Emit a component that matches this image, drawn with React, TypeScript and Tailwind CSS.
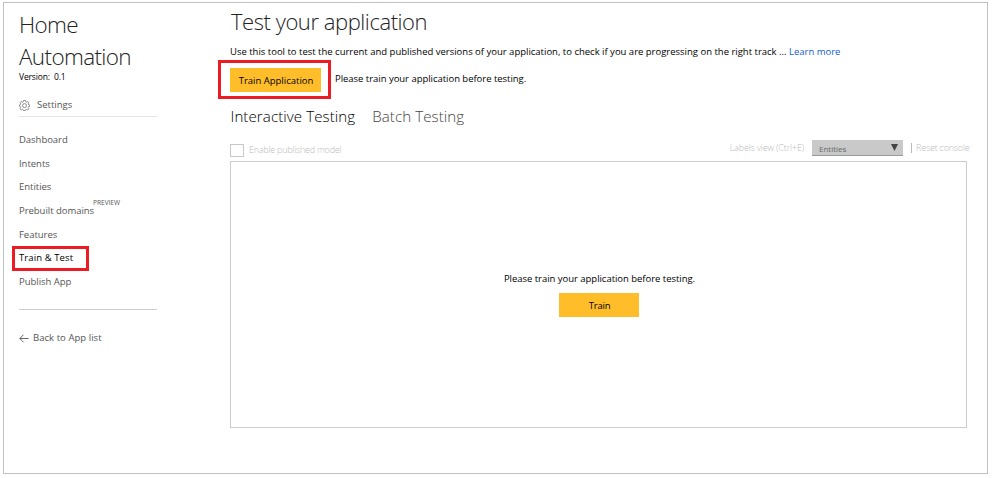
import React from "react";

const navItems = ["Dashboard", "Intents", "Entities", "Prebuilt domains", "Features", "Train & Test", "Publish App"];

function GearIcon() {
  return (
    <svg width="11" height="11" viewBox="0 0 11 11" fill="none" stroke="#777" strokeWidth="0.8" className="shrink-0">
      <path d="M4.500 0.500h2l.3 1.300 .8.400 1.200-.7 1.100 1.300-.7 1.100.3.800 1.100.2v1.500l-1.100.3-.4.900.7 1.100-1.200 1.300-1.200-.7-.7.300-.3 1h-1.900l-.3-1-.8-.3-1.200.7L1 8.700l.7-1.100-.3-.9-1-.3V4.900l1-.2.4-.8L1 2.800l1.200-1.300 1.200.7.800-.4z" />
      <circle cx="5.500" cy="5.600" r="2" />
    </svg>
  );
}

function BackIcon() {
  return (
    <svg width="10" height="9" viewBox="0 0 10 9" fill="none" stroke="#555" strokeWidth="0.9" className="mt-px shrink-0">
      <path d="M9.500 4.500H0.800M4.500 0.700L0.800 4.500L4.500 8.300" />
    </svg>
  );
}

function Sidebar() {
  return (
    <aside className="ml-[15px] flex w-[138px] shrink-0 flex-col pt-[6px] text-[#555]">
      <h1 className="w-[130px] text-[22.500px] leading-8 font-light tracking-[-0.640px] text-[#222]">Home Automation</h1>
      <p className="-mt-[3px] h-[14px] text-[8.500px] leading-[14px] tracking-[-0.150px] text-black">
        Version:&nbsp; 0.1
      </p>
      <div className="mt-[9px] flex h-[24px] items-center gap-[7px] border-b border-[#e6e6e6] pt-[2px] text-[9.500px]">
        <GearIcon />
        <span>Settings</span>
      </div>
      <nav className="mt-[11px] flex flex-col text-[9.500px]">
        {navItems.map((item) => (
          <a key={item} className="flex h-[23.700px] items-center whitespace-nowrap">
            {item === "Train & Test" ? (
              <span className="-ml-[7px] flex h-[25px] w-[77px] shrink-0 items-center border-3 border-[#ed1c24] pb-px pl-1 font-medium tracking-[0.100px] text-[#000]">
                {item}
              </span>
            ) : (
              <span className="mt-[0.500px] tracking-[-0.030px]">{item}</span>
            )}
            {item === "Prebuilt domains" && (
              <sup className="top-0 -mt-[16px] -ml-px text-[6.500px] leading-none">PREVIEW</sup>
            )}
          </a>
        ))}
      </nav>
      <div className="mt-[15px] border-b border-[#ccc]" />
      <a className="mt-[21px] flex h-[14px] items-center gap-1 text-[9.500px] tracking-[0.050px]">
        <BackIcon />
        <span>Back to App list</span>
      </a>
    </aside>
  );
}

function Console() {
  return (
    <section className="flex h-[267px] w-[737px] flex-col items-center border border-[#ccc] pt-[110px] text-[9.500px] text-black">
      <p className="ml-[2px] h-[14px] leading-[14px] tracking-[-0.030px]">Please train your application before testing.</p>
      <button className="mt-[7px] h-6 w-20 bg-[#ffbd29] pt-[2px] pl-[2px] tracking-[-0.200px]">Train</button>
    </section>
  );
}

function Main() {
  return (
    <main className="ml-[73px] flex w-[738px] flex-col text-[9.500px] text-black">
      <h2 className="mt-[2px] ml-px h-8 text-[22px] leading-8 font-light tracking-[-0.440px] text-[#222]">Test your application</h2>
      <p className="mt-[8px] h-[14px] leading-[14px] tracking-[-0.005px] whitespace-nowrap">
        Use this tool to test the current and published versions of your application, to check if you are progressing on the right track ...{" "}
        <a className="text-[#1160d0]">Learn more</a>
      </p>
      <div className="mt-px -ml-[12px] flex h-[39px]">
        <div className="flex w-[113px] items-center border-3 border-[#ed1c24] pl-[9px]">
          <button className="h-6 w-[91px] bg-[#ffbd29] pt-[3px] pl-px">Train Application</button>
        </div>
        <p className="mt-[12px] ml-1 h-[14px] leading-[14px] tracking-[-0.030px]">Please train your application before testing.</p>
      </div>
      <div className="mt-[5px] mb-px flex h-6 gap-[17px] text-[15.100px] leading-6 font-light tracking-[0.080px]">
        <a className="ml-[0.500px]">Interactive Testing</a>
        <a className="text-[#444]">Batch Testing</a>
      </div>
      <div className="flex h-[32px] w-[738px] text-[9px] font-light text-[#bbb]">
        <span className="mt-[15px] h-[13px] w-[14px] shrink-0 border border-[#c8c8c8]" />
        <span className="mt-[14px] ml-[5px] h-[14px] leading-[14px] tracking-[-0.240px]">Enable published model</span>
        <div className="mt-[11px] ml-auto flex h-4 items-center tracking-[-0.150px]">
          <span>Labels view (Ctrl+E)</span>
          <div className="mr-2 ml-2 flex h-4 w-[91px] items-center justify-between border-b border-[#999] bg-[#c9c9c9] pr-[5px] pl-[7px] text-[8px] font-normal tracking-normal text-[#666]">
            <span className="mt-[3px]">Entities</span>
            <svg width="7" height="7" viewBox="0 0 7 7">
              <path d="M0 0h7L3.500 7z" fill="#444" />
            </svg>
          </div>
          <div className="flex w-[57px] items-center whitespace-nowrap">
            <span className="h-[10px] w-px shrink-0 bg-[#bbb]" />
            <span className="ml-1 tracking-[-0.200px]">Reset console</span>
          </div>
        </div>
      </div>
      <Console />
    </main>
  );
}

export default function App() {
  return (
    <div className="h-[478px] w-[992px] overflow-hidden bg-white pt-[2px] pl-[3px] font-['Open_Sans','Noto_Sans',sans-serif]">
      <div className="flex h-[472px] w-[985px] border border-[#c0c0c0]">
        <Sidebar />
        <Main />
      </div>
    </div>
  );
}
